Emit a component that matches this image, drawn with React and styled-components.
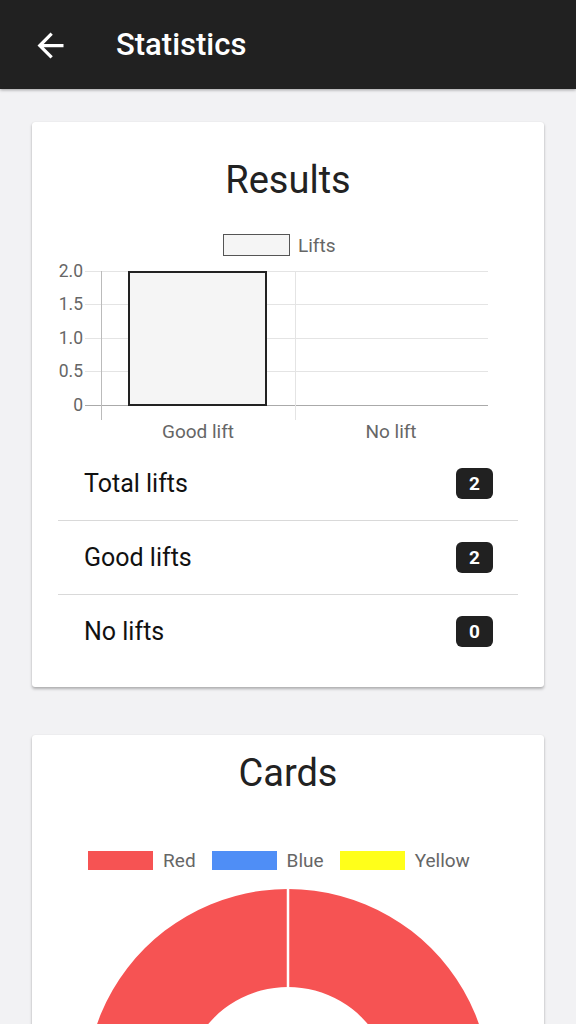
import React from "react";
import styled, { createGlobalStyle } from "styled-components";

const GlobalStyle = createGlobalStyle`
  html, body {
    margin: 0;
    padding: 0;
    overflow: hidden;
    background: #f2f2f4;
    font-family: Roboto, "Noto Sans", "Liberation Sans", sans-serif;
  }
`;

const RED = "#f65353";
const BLUE = "#4f8ef6";
const YELLOW = "#ffff1a";

const rows = [
  { label: "Total lifts", value: 2 },
  { label: "Good lifts", value: 2 },
  { label: "No lifts", value: 0 },
];

const cardLegend = [
  { label: "Red", color: RED },
  { label: "Blue", color: BLUE },
  { label: "Yellow", color: YELLOW },
];

const gridY = [
  { y: 67, label: "2.0" },
  { y: 100, label: "1.5" },
  { y: 134, label: "1.0" },
  { y: 167, label: "0.5" },
  { y: 201, label: "0" },
];

const BackArrow = () => (
  <svg width="39" height="39" viewBox="0 0 24 24" fill="#fff">
    <path d="M20 11H7.83l5.59-5.59L12 4l-8 8 8 8 1.41-1.41L7.83 13H20v-2z" />
  </svg>
);

const ResultsChart = () => (
  <ChartSvg width="512" height="243" viewBox="0 0 512 243">
    <rect x="191.5" y="30.5" width="66" height="21" fill="#f5f5f5" stroke="#555" strokeWidth="1" />
    <ChartText x="266" y="48">Lifts</ChartText>
    {gridY.map(g => (
      <g key={g.label}>
        <line
          x1="53"
          x2="456"
          y1={g.y + 0.5}
          y2={g.y + 0.5}
          stroke={g.label === "0" ? "#aaa" : "#e4e4e4"}
          strokeWidth="1"
        />
        <ChartText x="51" y={g.y + 6} textAnchor="end" size={17.5}>
          {g.label}
        </ChartText>
      </g>
    ))}
    <line x1="69.5" x2="69.5" y1="67" y2="216" stroke="#bbb" strokeWidth="1" />
    <line x1="263.5" x2="263.5" y1="67" y2="216" stroke="#e4e4e4" strokeWidth="1" />
    <rect x="97" y="68" width="137" height="133" fill="#f5f5f5" stroke="#222" strokeWidth="2" />
    <ChartText x="166" y="234" textAnchor="middle">Good lift</ChartText>
    <ChartText x="359" y="234" textAnchor="middle">No lift</ChartText>
  </ChartSvg>
);

const Doughnut = () => {
  const cx = 256;
  const cy = 211.6;
  const R = 202.6;
  const r = 104.6;
  const ring = `M ${cx} ${cy - R} A ${R} ${R} 0 1 1 ${cx - 0.01} ${cy - R} Z
    M ${cx} ${cy - r} A ${r} ${r} 0 1 0 ${cx + 0.01} ${cy - r} Z`;
  return (
    <ChartSvg width="512" height="240" viewBox="0 0 512 240">
      <path d={ring} fill={RED} fillRule="evenodd" />
      <line x1={cx} x2={cx} y1={cy - R - 1} y2={cy - r + 1} stroke="#fff" strokeWidth="2.5" />
    </ChartSvg>
  );
};

const App = () => {
  return (
    <>
      <GlobalStyle />
      <Header>
        <BackButton>
          <BackArrow />
        </BackButton>
        <HeaderTitle>Statistics</HeaderTitle>
      </Header>
      <Content>
        <Card>
          <CardTitle top={34}>Results</CardTitle>
          <ResultsChart />
          <StatList>
            {rows.map(row => (
              <StatRow key={row.label}>
                <StatLabel>{row.label}</StatLabel>
                <Badge>{row.value}</Badge>
              </StatRow>
            ))}
          </StatList>
        </Card>
        <Card>
          <CardTitle top={14}>Cards</CardTitle>
          <Legend>
            {cardLegend.map(item => (
              <LegendItem key={item.label}>
                <LegendBox color={item.color} />
                <LegendLabel>{item.label}</LegendLabel>
              </LegendItem>
            ))}
          </Legend>
          <Doughnut />
        </Card>
      </Content>
    </>
  );
};

export default App;

const Header = styled.header`
  display: flex;
  align-items: center;
  height: 89px;
  background: #212121;
  box-shadow: 0 1px 3px rgba(0, 0, 0, 0.35);
  position: relative;
  z-index: 1;
`;

const BackButton = styled.div`
  display: flex;
  align-items: center;
  justify-content: center;
  width: 39px;
  height: 39px;
  margin-left: 31px;
  margin-top: 1px;
`;

const HeaderTitle = styled.h1`
  margin: 0 0 0 46px;
  color: #fff;
  font-size: 31px;
  font-weight: 500;
`;

const Content = styled.main`
  display: flex;
  flex-direction: column;
  gap: 48px;
  padding: 33px 32px 0;
`;

const Card = styled.section`
  background: #fff;
  border-radius: 3px;
  box-shadow: 0 2px 3px rgba(0, 0, 0, 0.28), 0 0 1px rgba(0, 0, 0, 0.12);
  padding-bottom: 19px;
`;

const CardTitle = styled.h2`
  margin: 0;
  padding-top: ${({ top }) => top}px;
  height: 48px;
  line-height: 48px;
  text-align: center;
  font-size: 38px;
  font-weight: 400;
  color: #222;
`;

const ChartSvg = styled.svg`
  display: block;
`;

const ChartText = styled.text`
  font-family: Roboto, "Noto Sans", sans-serif;
  font-size: ${({ size }) => size || 19}px;
  fill: #666;
`;

const StatList = styled.ul`
  list-style: none;
  margin: 0 26px;
  padding: 0;
`;

const StatRow = styled.li`
  display: flex;
  align-items: center;
  justify-content: space-between;
  height: 73px;
  padding: 0 25px 0 26px;

  & + & {
    border-top: 1px solid #d9d9d9;
  }
`;

const StatLabel = styled.span`
  font-size: 25px;
  color: #111;
`;

const Badge = styled.span`
  display: flex;
  align-items: center;
  justify-content: center;
  width: 37px;
  height: 31px;
  border-radius: 6px;
  background: #212121;
  color: #fff;
  font-size: 19px;
  font-weight: 700;
`;

const Legend = styled.div`
  display: flex;
  justify-content: center;
  gap: 16px;
  margin-top: 53px;
  padding-right: 18px;
  height: 20px;
  margin-bottom: 10px;
`;

const LegendItem = styled.div`
  display: flex;
  align-items: center;
  gap: 10px;
`;

const LegendBox = styled.span`
  width: 65px;
  height: 19px;
  background: ${({ color }) => color};
`;

const LegendLabel = styled.span`
  font-size: 19px;
  color: #666;
`;
